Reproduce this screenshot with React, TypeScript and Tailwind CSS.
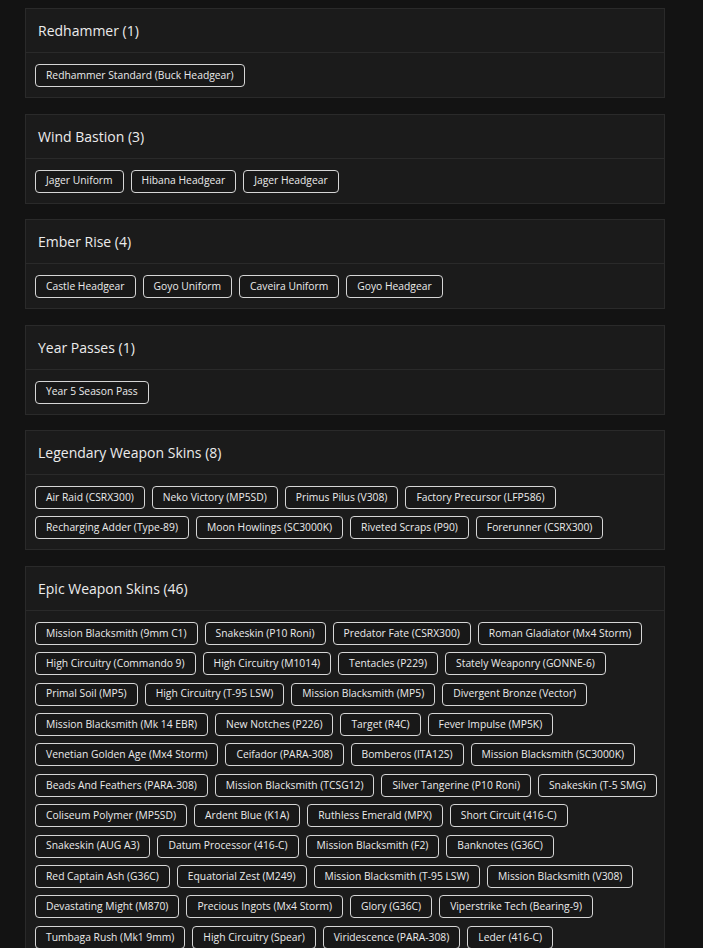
import React from "react";

type Section = { title: string; items: string[] };

const sections: Section[] = [
  { title: "Redhammer", items: ["Redhammer Standard (Buck Headgear)"] },
  { title: "Wind Bastion", items: ["Jager Uniform", "Hibana Headgear", "Jager Headgear"] },
  { title: "Ember Rise", items: ["Castle Headgear", "Goyo Uniform", "Caveira Uniform", "Goyo Headgear"] },
  { title: "Year Passes", items: ["Year 5 Season Pass"] },
  {
    title: "Legendary Weapon Skins",
    items: [
      "Air Raid (CSRX300)",
      "Neko Victory (MP5SD)",
      "Primus Pilus (V308)",
      "Factory Precursor (LFP586)",
      "Recharging Adder (Type-89)",
      "Moon Howlings (SC3000K)",
      "Riveted Scraps (P90)",
      "Forerunner (CSRX300)",
    ],
  },
  {
    title: "Epic Weapon Skins",
    items: [
      "Mission Blacksmith (9mm C1)",
      "Snakeskin (P10 Roni)",
      "Predator Fate (CSRX300)",
      "Roman Gladiator (Mx4 Storm)",
      "High Circuitry (Commando 9)",
      "High Circuitry (M1014)",
      "Tentacles (P229)",
      "Stately Weaponry (GONNE-6)",
      "Primal Soil (MP5)",
      "High Circuitry (T-95 LSW)",
      "Mission Blacksmith (MP5)",
      "Divergent Bronze (Vector)",
      "Mission Blacksmith (Mk 14 EBR)",
      "New Notches (P226)",
      "Target (R4C)",
      "Fever Impulse (MP5K)",
      "Venetian Golden Age (Mx4 Storm)",
      "Ceifador (PARA-308)",
      "Bomberos (ITA12S)",
      "Mission Blacksmith (SC3000K)",
      "Beads And Feathers (PARA-308)",
      "Mission Blacksmith (TCSG12)",
      "Silver Tangerine (P10 Roni)",
      "Snakeskin (T-5 SMG)",
      "Coliseum Polymer (MP5SD)",
      "Ardent Blue (K1A)",
      "Ruthless Emerald (MPX)",
      "Short Circuit (416-C)",
      "Snakeskin (AUG A3)",
      "Datum Processor (416-C)",
      "Mission Blacksmith (F2)",
      "Banknotes (G36C)",
      "Red Captain Ash (G36C)",
      "Equatorial Zest (M249)",
      "Mission Blacksmith (T-95 LSW)",
      "Mission Blacksmith (V308)",
      "Devastating Might (M870)",
      "Precious Ingots (Mx4 Storm)",
      "Glory (G36C)",
      "Viperstrike Tech (Bearing-9)",
      "Tumbaga Rush (Mk1 9mm)",
      "High Circuitry (Spear)",
      "Viridescence (PARA-308)",
      "Leder (416-C)",
      "Mission Blacksmith (SMG-11)",
      "High Circuitry (AR-15.50)",
    ],
  },
];

function Card({ s }: { s: Section }) {
  return (
    <div className="border border-[#2a2a2a] bg-[#1b1b1b]">
      <div className="h-[44px] flex items-center px-3 border-b border-[#2a2a2a]">
        <h2 className="text-[14px] font-medium text-[#ececec]">
          {s.title} ({s.items.length})
        </h2>
      </div>
      <div className="flex flex-wrap gap-x-[7px] gap-y-[7.4px] pl-[9px] pr-[6px] pt-[11px] pb-[10px]">
        {s.items.map((it) => (
          <span
            key={it}
            className="h-[23px] flex items-center px-[10px] rounded-[4px] border border-[#d6d6d6] bg-[#181818] text-[10.3px] text-[#ebebeb] whitespace-nowrap"
          >
            {it}
          </span>
        ))}
      </div>
    </div>
  );
}

export default function App() {
  return (
    <div
      className="min-h-screen bg-[#131313] pl-[25px] pr-[38px] pt-[8px] pb-8"
      style={{ fontFamily: '"Open Sans", "Noto Sans", sans-serif' }}
    >
      <div className="flex flex-col gap-[15.5px]">
        {sections.map((s) => (
          <Card key={s.title} s={s} />
        ))}
      </div>
    </div>
  );
}
